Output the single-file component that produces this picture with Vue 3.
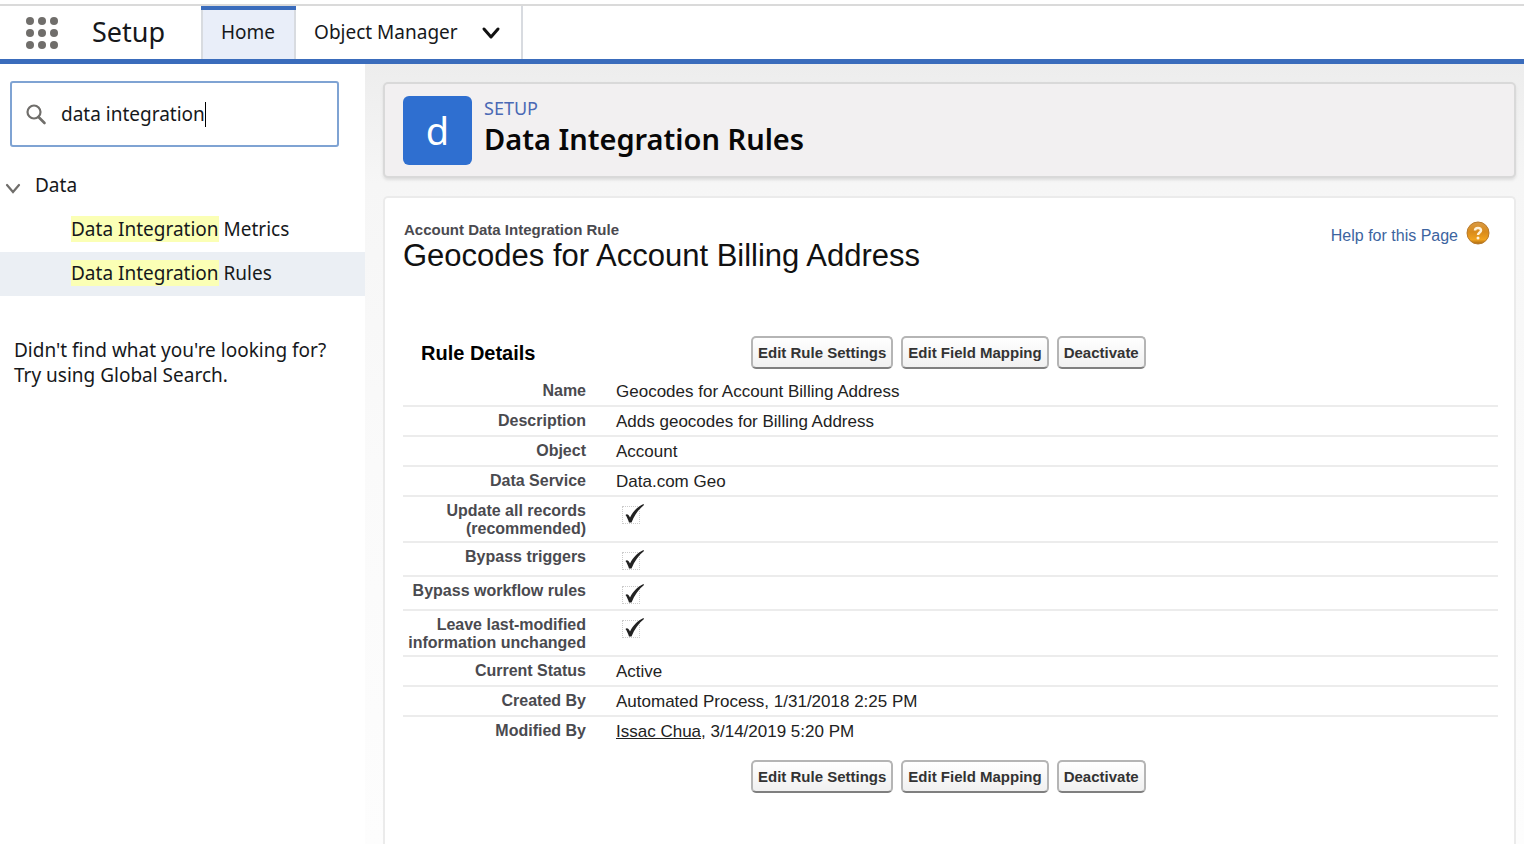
<script setup>
import { ref } from 'vue'

const query = ref('data integration')

const results = [
  { match: 'Data Integration', rest: ' Metrics', current: false },
  { match: 'Data Integration', rest: ' Rules', current: true },
]

const actions = ['Edit Rule Settings', 'Edit Field Mapping', 'Deactivate']

const rows = [
  { id: 'name', label: 'Name', text: 'Geocodes for Account Billing Address' },
  { id: 'description', label: 'Description', text: 'Adds geocodes for Billing Address' },
  { id: 'object', label: 'Object', text: 'Account' },
  { id: 'service', label: 'Data Service', text: 'Data.com Geo' },
  { id: 'update-all', label: 'Update all records (recommended)', checked: true },
  { id: 'bypass-triggers', label: 'Bypass triggers', checked: true },
  { id: 'bypass-workflow', label: 'Bypass workflow rules', checked: true },
  { id: 'leave-modified', label: 'Leave last-modified information unchanged', checked: true },
  { id: 'status', label: 'Current Status', text: 'Active' },
  { id: 'created', label: 'Created By', text: 'Automated Process, 1/31/2018 2:25 PM' },
  { id: 'modified', label: 'Modified By', link: 'Issac Chua', text: ', 3/14/2019 5:20 PM' },
]
</script>

<template>
  <div class="app">
    <header class="topbar">
      <button class="launcher" type="button" aria-label="App Launcher">
        <svg width="34" height="34" viewBox="0 0 34 34" fill="#706e6b">
          <template v-for="r in 3" :key="r">
            <circle v-for="c in 3" :key="c" :cx="c * 12 - 7" :cy="r * 12 - 7" r="4" />
          </template>
        </svg>
      </button>
      <span class="app-name">Setup</span>
      <nav class="tabs">
        <a class="tab active" href="#home">Home</a>
        <a class="tab object-manager" href="#objects">
          Object Manager
          <svg width="20" height="14" viewBox="0 0 20 14" fill="none" stroke="#111" stroke-width="3" stroke-linecap="round" stroke-linejoin="round">
            <path d="M3 3 10 11 17 3" />
          </svg>
        </a>
      </nav>
    </header>

    <div class="body">
      <aside class="sidebar">
        <label class="search">
          <svg width="22" height="22" viewBox="0 0 22 22" fill="none" stroke="#706e6b">
            <circle cx="9" cy="9" r="6.500" stroke-width="2.200" />
            <path d="M13.500 14 19.500 20" stroke-width="2.600" stroke-linecap="round" />
          </svg>
          <input v-model="query" type="text" aria-label="Quick Find" />
          <span class="caret"></span>
        </label>

        <button class="group" type="button" aria-expanded="true">
          <svg width="16" height="12" viewBox="0 0 16 12" fill="none" stroke="#706e6b" stroke-width="2.200" stroke-linecap="round">
            <path d="M2 2 8 9 14 2" />
          </svg>
          Data
        </button>
        <ul class="results">
          <li v-for="item in results" :key="item.rest" :class="{ current: item.current }">
            <a href="#rules"><mark>{{ item.match }}</mark>{{ item.rest }}</a>
          </li>
        </ul>
        <p class="hint">Didn't find what you're looking for?<br />Try using Global Search.</p>
      </aside>

      <main class="content">
        <section class="page-header">
          <div class="badge">d</div>
          <div>
            <div class="eyebrow">SETUP</div>
            <h1>Data Integration Rules</h1>
          </div>
        </section>

        <section class="panel">
          <div class="panel-top">
            <div>
              <div class="kind">Account Data Integration Rule</div>
              <h2>Geocodes for Account Billing Address</h2>
            </div>
            <a class="help" href="#help">
              <span>Help for this Page</span>
              <svg width="24" height="24" viewBox="0 0 24 24">
                <defs>
                  <linearGradient id="orb" x1="0" y1="0" x2="0" y2="1">
                    <stop offset="0" stop-color="#d99a45" />
                    <stop offset="0.45" stop-color="#d98b1c" />
                    <stop offset="0.8" stop-color="#f0a21f" />
                    <stop offset="1" stop-color="#a8680f" />
                  </linearGradient>
                </defs>
                <circle cx="12" cy="12" r="11" fill="url(#orb)" stroke="#b87a2c" />
                <path d="M9 9.500C9 6 15 6 15 9.500C15 11.500 12 11.500 12 14" fill="none" stroke="#fff3dc" stroke-width="2.500" />
                <circle cx="12" cy="17" r="1.500" fill="#fff3dc" />
              </svg>
            </a>
          </div>

          <div class="bar">
            <h3>Rule Details</h3>
            <div class="actions">
              <button v-for="a in actions" :key="a" type="button">{{ a }}</button>
            </div>
          </div>

          <table>
            <tbody>
              <tr v-for="row in rows" :key="row.id">
                <th scope="row"><label v-if="row.checked" :for="row.id">{{ row.label }}</label><template v-else>{{ row.label }}</template></th>
                <td>
                  <span v-if="row.checked" class="check">
                    <input :id="row.id" type="checkbox" checked disabled />
                    <svg width="24" height="24" viewBox="0 0 24 24">
                      <path d="M4.500 12C6 10.500 7.500 11.500 9 14.500C12 8.500 16 4 22.500 1L23 2C17.500 6.500 13.500 12 10.500 19.500H8C7 16.500 6 14 4.500 12Z" fill="#222" />
                    </svg>
                  </span>
                  <template v-else><a v-if="row.link" href="#user">{{ row.link }}</a>{{ row.text }}</template>
                </td>
              </tr>
            </tbody>
          </table>

          <div class="bar bottom">
            <div class="actions">
              <button v-for="a in actions" :key="a" type="button">{{ a }}</button>
            </div>
          </div>
        </section>
      </main>
    </div>
  </div>
</template>

<style>
body {
  background: #fff;
}
</style>

<style scoped>
* {
  box-sizing: border-box;
}

.app {
  display: flex;
  flex-direction: column;
  min-height: 100vh;
  font: 19px/25px "Noto Sans", sans-serif;
  color: #16181b;
}

a {
  color: inherit;
  text-decoration: none;
}

button {
  margin: 0;
  font: inherit;
  color: inherit;
}

h1, h2, h3, p, ul {
  margin: 0;
  padding: 0;
}

.topbar {
  display: flex;
  align-items: stretch;
  height: 64px;
  padding-left: 25px;
  border-bottom: 5px solid #3a6cbc;
  background: linear-gradient(#fff 4px, #dadada 4px, #dadada 6px, #fff 6px);
}

.launcher {
  display: flex;
  align-items: center;
  padding: 6px 0 0;
  border: 0;
  background: none;
}

.app-name {
  width: 142px;
  padding: 6px 0 0 33px;
  font-size: 27px;
  line-height: 52px;
}

.tabs {
  display: flex;
  padding-top: 6px;
}

.tab {
  display: flex;
  align-items: center;
  border-right: 2px solid #d8dbe0;
  padding: 0 18px;
}

.tab.active {
  position: relative;
  padding-right: 19px;
  border-left: 2px solid #d8dbe0;
  background: #e9eef9;
}

.tab.active::before {
  content: "";
  position: absolute;
  top: 0;
  left: -2px;
  right: -2px;
  height: 4px;
  background: #3a6cbc;
}

.tab.object-manager {
  gap: 23px;
  padding-right: 20px;
}

.body {
  display: flex;
  flex: 1;
}

.sidebar {
  flex: 0 0 365px;
  padding-top: 17px;
}

.search {
  display: flex;
  align-items: center;
  height: 66px;
  margin: 0 26px 0 10px;
  padding-left: 13px;
  border: 2px solid #7fa3d3;
  border-radius: 3px;
  overflow: hidden;
}

.search input {
  field-sizing: content;
  margin-left: 14px;
  padding: 0;
  border: 0;
  outline: 0;
  background: none;
  font: inherit;
  color: inherit;
}

.caret {
  width: 1px;
  height: 25px;
  background: #000;
}

.group {
  display: flex;
  align-items: center;
  gap: 14px;
  height: 45px;
  margin-top: 16px;
  padding: 0 5px;
  border: 0;
  background: none;
}

.group svg {
  margin-top: 6px;
}

.results {
  list-style: none;
}

.results li {
  height: 44px;
  padding-left: 71px;
  line-height: 43px;
}

.results .current {
  background: #ebeff4;
}

mark {
  background: #fbffb5;
  color: inherit;
}

.hint {
  margin: 42px 0 0 14px;
}

.content {
  display: flex;
  flex: 1;
  flex-direction: column;
  min-width: 0;
  padding: 18px 8px 0 18px;
  background: linear-gradient(#ededed, #f6f6f6 120px, #fafafa 400px, #fdfdfd);
}

.page-header {
  display: flex;
  gap: 12px;
  height: 96px;
  padding: 12px 18px;
  border: 2px solid #d9d9d9;
  border-radius: 5px;
  background: #f2f0f1;
  box-shadow: 0 2px 3px #ddd;
}

.badge {
  width: 69px;
  height: 69px;
  border-radius: 6px;
  background: #2f6fd0;
  color: #fff;
  font-size: 38px;
  line-height: 68px;
  text-align: center;
}

.eyebrow {
  color: #4a69b5;
  font-size: 18px;
}

h1 {
  font-size: 29px;
  font-weight: 600;
  line-height: 36px;
  color: #080707;
}

.panel {
  flex: 1;
  margin-top: 18px;
  padding: 22px 16px 0 18px;
  border: 2px solid #ebebeb;
  border-bottom: 0;
  border-radius: 5px 5px 0 0;
  background: #fff;
  font: 17px/20px "Liberation Sans", Arial, sans-serif;
  color: #222;
}

.panel-top {
  display: flex;
  justify-content: space-between;
  align-items: flex-start;
}

.kind {
  padding-left: 1px;
  font-size: 15px;
  font-weight: bold;
  color: #4a4a4f;
}

h2 {
  font-size: 31px;
  font-weight: normal;
  line-height: 32px;
  color: #111;
}

.help {
  display: flex;
  align-items: center;
  gap: 8px;
  margin-right: 8px;
  font-size: 16px;
  color: #3c64a0;
}

.help span {
  padding-top: 6px;
}

.bar {
  display: flex;
  align-items: center;
  margin-top: 64px;
  padding-left: 18px;
}

h3 {
  width: 330px;
  font-size: 20px;
  color: #000;
}

.actions {
  display: flex;
  gap: 8px;
}

.actions button {
  height: 33px;
  padding: 0 5px;
  border: 2px solid #b5b5b5;
  border-bottom-color: #7f7f7f;
  border-radius: 5px;
  background: linear-gradient(#fff, #f0f0f0);
  font-size: 15px;
  font-weight: bold;
  color: #333;
}

table {
  width: 100%;
  margin-top: 8px;
  border-collapse: separate;
  border-spacing: 0;
}

th,
td {
  padding: 5px 0 3px;
  border-bottom: 2px solid #ececec;
  vertical-align: top;
}

tr:last-child th,
tr:last-child td {
  border-bottom: 0;
}

th {
  width: 183px;
  font-size: 16px;
  line-height: 18px;
  text-align: right;
  color: #4a4a4f;
}

td {
  padding-left: 30px;
}

td a {
  text-decoration: underline;
}

.check {
  display: block;
  position: relative;
  height: 24px;
  padding: 4px 0 0 6px;
}

.check input {
  display: block;
  appearance: none;
  width: 18px;
  height: 18px;
  margin: 0;
  border: 1px dotted #ccc;
}

.check svg {
  position: absolute;
  top: 1px;
  left: 5px;
}

.bottom {
  margin-top: 15px;
  padding-left: 348px;
}
</style>
